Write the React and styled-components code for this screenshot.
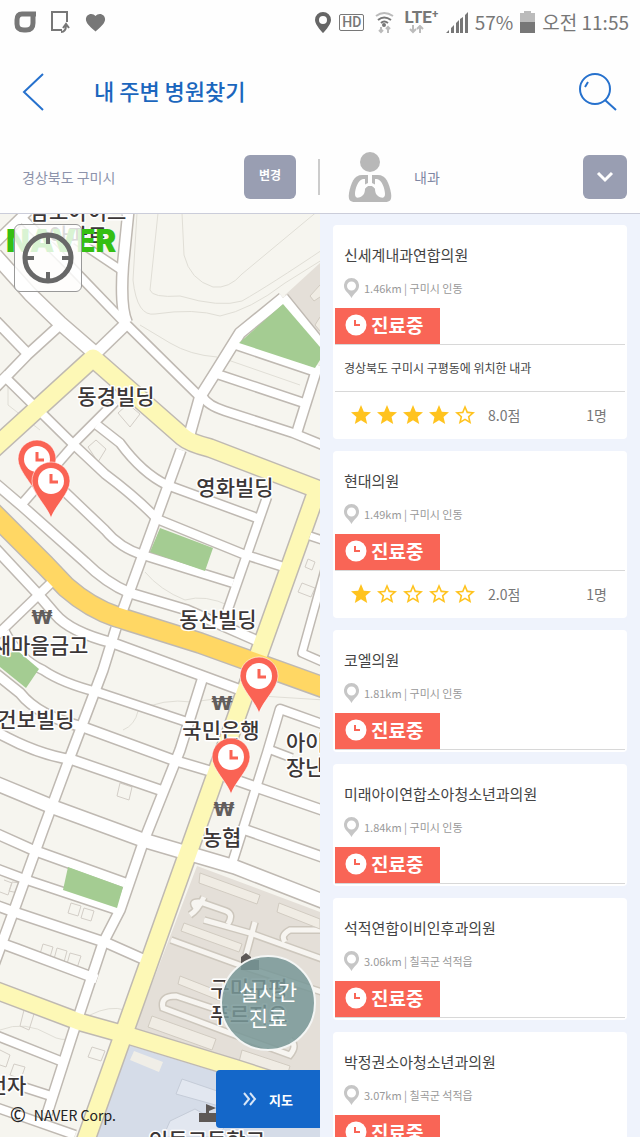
import React from 'react';
import styled, { createGlobalStyle } from 'styled-components';
import { MdFavorite, MdStar, MdStarBorder } from 'react-icons/md';

const GlobalStyle = createGlobalStyle`
  * {
    box-sizing: border-box;
  }
  body {
    margin: 0;
    background: #fefefe;
    font-family: 'Noto Sans CJK KR', 'Noto Sans', sans-serif;
  }
  button, select {
    font-family: inherit;
  }
`;

const StyledPage = styled.div`
  display: flex;
  flex-direction: column;
  height: 100vh;
  overflow: hidden;
`;

const StyledStatusBar = styled.div`
  display: flex;
  flex-shrink: 0;
  justify-content: space-between;
  align-items: center;
  height: 44px;
  padding: 0 11px 0 14px;
  color: #777;
  font-size: 19px;
  line-height: 24px;
`;
const StyledStatusGroup = styled.div`
  display: flex;
  align-items: center;
  gap: ${props => props.$gap}px;
  white-space: nowrap;
`;
const StyledHd = styled.span`
  padding: 0 2px;
  border: 1px solid #777;
  border-radius: 2px;
  font-family: Roboto, sans-serif;
  font-size: 14px;
  font-weight: 500;
  line-height: 15px;
`;
const StyledNetwork = styled.span`
  display: flex;
  flex-direction: column;
  font-family: Roboto, sans-serif;
  font-size: 17px;
  font-weight: 700;
  line-height: 15px;
`;

const StyledHeader = styled.header`
  display: flex;
  flex-shrink: 0;
  align-items: center;
  height: 96px;
  padding: 0 22px;
`;
const StyledIconButton = styled.button`
  display: flex;
  padding: 0;
  border: 0;
  background: none;
  cursor: pointer;
`;
const StyledTitle = styled.h1`
  flex: 1;
  margin: 0 0 4px 48px;
  color: #1b66bd;
  font-size: 22px;
  font-weight: 500;
  line-height: 32px;
`;

const StyledFilters = styled.div`
  display: flex;
  flex-shrink: 0;
  height: 74px;
  border-bottom: 1px solid #cbcdda;
`;
const StyledFilter = styled.div`
  display: flex;
  align-items: center;
  width: 50%;
  padding: ${props => props.$padding};
  color: #8d93ab;
  font-size: 14px;
`;
const StyledRegion = styled.span`
  flex: 1;
`;
const StyledDivider = styled.div`
  width: 2px;
  height: 36px;
  margin-left: 22px;
  background: #ccc;
`;
const StyledChange = styled.button`
  width: 52px;
  height: 44px;
  padding: 0 0 4px;
  border: 0;
  border-radius: 6px;
  background: #999eb2;
  color: #fff;
  font-size: 12px;
  font-weight: 700;
`;
const StyledSelect = styled.select`
  flex: 1;
  min-width: 0;
  height: 44px;
  margin-left: 22px;
  padding: 0;
  border: 0;
  background: none;
  color: #7f86a3;
  font-size: 14px;
  appearance: none;
`;
const StyledArrow = styled.label`
  display: flex;
  justify-content: center;
  align-items: center;
  width: 44px;
  height: 44px;
  border-radius: 6px;
  background: #999eb2;
`;

const StyledBody = styled.main`
  display: flex;
  flex: 1;
  min-height: 0;
`;

const StyledMap = styled.section`
  position: relative;
  width: 50%;
  overflow: hidden;
  background: #f6f5ef;
`;
const StyledMapDrawing = styled.svg`
  display: block;
  width: 100%;
  height: 100%;
  font-size: 21px;
  font-weight: 500;
`;
const StyledBank = styled.text`
  fill: #625d5c;
  font-family: 'DejaVu Sans', sans-serif;
  font-size: 19px;
  font-weight: 700;
  stroke: none;
`;
const StyledNaver = styled.span`
  position: absolute;
  top: 9px;
  left: 6px;
  color: #35bf12;
  font-family: Inter, sans-serif;
  font-size: 31px;
  font-weight: 900;
  line-height: 36px;
`;
const StyledLocate = styled.button`
  position: absolute;
  top: 10px;
  left: 14px;
  display: flex;
  justify-content: center;
  align-items: center;
  width: 68px;
  height: 68px;
  padding: 0;
  border: 1px solid #999;
  border-radius: 6px;
  background: #ffffffd0;
`;
const StyledLive = styled.button`
  position: absolute;
  right: 4px;
  bottom: 86px;
  width: 96px;
  height: 96px;
  padding: 2px 0 0;
  border: 2px solid #f4f6f5;
  border-radius: 50%;
  background: #789898d9;
  color: #fff;
  font-size: 21px;
  line-height: 26px;
`;
const StyledMapButton = styled.button`
  position: absolute;
  right: 0;
  bottom: 9px;
  display: flex;
  justify-content: center;
  align-items: center;
  gap: 12px;
  width: 104px;
  height: 58px;
  padding: 0;
  border: 0;
  border-radius: 4px 0 0 4px;
  background: #1467c9;
  color: #fff;
  font-size: 13px;
  font-weight: 700;
`;
const StyledCopyright = styled.div`
  position: absolute;
  bottom: 12px;
  left: 10px;
  display: flex;
  align-items: center;
  gap: 8px;
  color: #222;
  font-size: 14px;
  line-height: 20px;
`;
const StyledCopyrightSign = styled.span`
  font-family: 'Noto Sans', sans-serif;
  font-size: 19px;
`;

const StyledList = styled.ul`
  display: flex;
  flex-direction: column;
  gap: 12px;
  width: 50%;
  margin: 0;
  padding: 11px 13px;
  overflow-y: auto;
  background: #eff3fc;
  list-style: none;
  scrollbar-width: none;
`;
const StyledCard = styled.li`
  flex-shrink: 0;
  padding: 0 2px 2px;
  border-radius: 4px;
  background: #fff;
`;
const StyledCardHead = styled.div`
  height: 83px;
  padding: 18px 9px 0;
`;
const StyledName = styled.h2`
  margin: 0;
  color: #444;
  font-size: 15px;
  font-weight: 400;
  line-height: 24px;
`;
const StyledPlace = styled.div`
  display: flex;
  align-items: center;
  gap: 5px;
  margin-top: 11px;
  color: #999;
  font-size: 11px;
  line-height: 20px;
`;
const StyledBadgeRow = styled.div`
  display: flex;
  border-bottom: 1px solid #d8d8d8;
`;
const StyledBadge = styled.span`
  display: flex;
  align-items: center;
  gap: 4px;
  width: 105px;
  height: 36px;
  padding: 0 0 2px 10px;
  background: #f96556;
  color: #fff;
  font-size: 19px;
  font-weight: 700;
  line-height: 32px;
`;
const StyledDescription = styled.p`
  height: 47px;
  margin: 0;
  padding: 0 9px;
  border-bottom: 1px solid #d8d8d8;
  color: #444;
  font-size: 12px;
  line-height: 46px;
  white-space: nowrap;
`;
const StyledRating = styled.div`
  display: flex;
  align-items: center;
  height: 45px;
  padding: 0 18px 0 14px;
  color: #777;
  font-size: 14px;
`;
const StyledStars = styled.div`
  display: flex;
  gap: 2px;
  margin-right: 11px;
  color: #ffc31f;
  font-size: 24px;
`;
const StyledVoters = styled.span`
  margin-left: auto;
`;

const hospitals = [
  {
    name: '신세계내과연합의원',
    place: '1.46km | 구미시 인동',
    description: '경상북도 구미시 구평동에 위치한 내과',
    stars: 4,
    score: '8.0점',
    voters: '1명',
  },
  { name: '현대의원', place: '1.49km | 구미시 인동', stars: 1, score: '2.0점', voters: '1명' },
  { name: '코엘의원', place: '1.81km | 구미시 인동' },
  { name: '미래아이연합소아청소년과의원', place: '1.84km | 구미시 인동' },
  { name: '석적연합이비인후과의원', place: '3.06km | 칠곡군 석적읍' },
  { name: '박정권소아청소년과의원', place: '3.07km | 칠곡군 석적읍' },
];

// [width, path]
const streets = [
  [13, 'M-5 255L30 294L60 323L97 355'],
  [9, 'M-5 243L34 205'],
  [8, 'M24 220L70 266L124 322L200 397'],
  [7, 'M76 240L121 270'],
  [10, 'M129 205L123 265Q120 308 127 323'],
  [11, 'M127 323L95 354'],
  [9, 'M60 325L27 355L-5 388'],
  [9, 'M-5 320L27 353'],
  [8, 'M2 374L72 443L105 474Q137 498 157 519L243 554L290 569'],
  [8, 'M72 445L115 402'],
  [8, 'M97 425L120 443Q142 473 167 485L257 518'],
  [8, 'M72 447L22 504'],
  [8, 'M55 484L64 491L105 530Q120 548 143 555L233 583'],
  [9, 'M-5 483L22 506L85 562Q106 583 130 593L187 610L260 642'],
  [10, 'M283 298L240 333L217 370L200 397L188 440'],
  [10, 'M283 298L325 350'],
  [8, 'M233 344L316 372'],
  [8, 'M217 374L304 403'],
  [8, 'M203 397Q207 405 225 411L293 433L325 446'],
  [9, 'M318 365L296 435'],
  [9, 'M181 450L153 527L122 612'],
  [9, 'M116 628L103 670L70 757L43 830L13 913L-8 970'],
  [8, 'M267 497L227 612'],
  [7, 'M310 536L325 541'],
  [7, 'M325 570L302 653L325 663'],
  [9, 'M-5 548L37 593L55 614Q70 632 113 643L200 675L246 692'],
  [8, 'M52 582L-5 637'],
  [8, 'M5 632Q20 660 43 670Q62 683 97 692L187 722'],
  [9, 'M-5 673L20 693Q38 716 83 727L173 760L220 774'],
  [9, 'M-5 731Q35 754 73 760L160 790'],
  [13, 'M-5 783L53 807L143 840L235 867L325 902'],
  [9, 'M-5 833L33 850L125 883'],
  [8, 'M-5 868L27 880L117 910'],
  [9, 'M202 680L180 750L143 843L120 910L103 943L73 1033L47 1114'],
  [9, 'M-5 905L17 913L107 943L143 959'],
  [9, 'M-5 941L17 949L97 979'],
  [8, 'M-5 1035L63 1062'],
  [8, 'M20 1086L51 1096'],
  [8, 'M-5 1107L75 1135'],
  [8, 'M325 725L280 709L267 753L230 870'],
  [9, 'M213 772L250 785L325 811'],
  [7, 'M271 750L292 758'],
  [9, 'M243 829L325 858'],
];
const avenues = [
  [17, 'M-8 450L93 358L183 437Q190 443 210 448L325 492'],
  [17, 'M318 488L246 690L124 1033L84 1145'],
  [16, 'M-5 990L80 1022L130 1036L235 1068L325 1097'],
];
const highway = 'M-8 512L45 565L66 587Q90 608 117 617L200 643L325 688';

const alleys = [
  'M204 897Q198 910 190 915M196 908Q190 901 200 902L226 911Q234 914 228 924M204 920L250 933L325 960',
  'M171 940L245 967L325 993M255 922L246 955M325 930L290 930Q280 935 285 942',
  'M248 1020L176 996Q160 996 163 1008L232 1034L290 1055Q298 1045 290 1040',
];
const buildings = [
  '200,873 260,895 257,904 199,883',
  '184,923 242,944 239,952 181,931',
  '180,976 226,994 223,1002 178,984',
  '152,1016 216,1039 212,1050 148,1027',
  '279,903 320,919 320,929 277,912',
  '242,1050 290,1066 287,1076 239,1062',
];
const houses = [
  'M118 413l10 -9l12 10l-10 13z',
  'M88 447l8 -7l10 9l-8 13z',
  'M120 783l12 4l-3 13l-12 -4z',
  'M71 903l10 3l-3 10l-10 -3zM84 908l10 3l-3 10l-10 -3z',
  'M43 944l10 3l-3 10l-10 -3zM57 948l10 3l-3 11l-10 -3zM70 953l11 3l-4 12l-10 -4z',
  'M24 1010l10 4l-5 16l-9 -4z',
  'M92 1047l13 4l-4 10l-13 -4z',
  'M4 880l8 3l-4 12l-8 -3M12 882l9 1l-3 10l-9 -2z',
  'M308 559l7 3l-3 8l-7 -3zM302 583l13 5l-4 9l-13 -5z',
  'M0 1050l10 5l-4 12l-6 -2M14 1064l11 3l-4 12l-11 -4z',
];
const contours = [
  'M182 213L184 255Q190 280 213 287Q229 289 242 274L325 205',
  'M158 213L150 290Q152 298 180 296Q220 308 242 301Q270 285 325 248',
  'M137 213L133 280Q137 317 155 314Q195 308 220 316Q250 310 285 283L325 258',
  'M140 325Q155 334 170 343Q190 355 217 357',
  'M228 360L300 385',
  'M88 514L105 535',
  'M145 572Q160 590 185 600Q205 594 230 606',
  'M123 730Q135 725 138 711Q163 698 192 702L245 695L325 700',
  'M8 387L8 405L40 430',
  'M0 1030Q25 1020 50 1035T90 1015Q110 1005 125 1010',
];
const labels = [
  [78, 219, '삼보아이스'],
  [78, 243, '아파트'],
  [116, 404, '동경빌딩'],
  [235, 495, '영화빌딩'],
  [218, 627, '동산빌딩'],
  [40, 653, '새마을금고'],
  [36, 727, '건보빌딩'],
  [221, 738, '국민은행'],
  [222, 845, '농협'],
  [249, 996, '구미구평'],
  [249, 1022, '푸르지오'],
  [7, 1093, '전자'],
  [207, 1148, '인동고등학교'],
];
const banks = [[42, 624], [222, 710], [224, 816]];
const pins = [[37, 459], [51, 481], [259, 676], [231, 757]];

const CarrierIcon = () => (
  <svg width="22" height="22" viewBox="0 0 22 22" fill="none" stroke="#777" strokeWidth="5">
    <path d="M22 3H8Q3 3 3 9V13Q3 19 10 19H12Q19 19 19 12V3" />
  </svg>
);

const DeviceIcon = () => (
  <svg width="20" height="24" viewBox="0 0 20 24" fill="none" stroke="#777" strokeWidth="2">
    <path d="M17 12V2H2V20H10M5 20H12" />
    <path d="M11 22Q16 22 16 15M13 18L16 14L19 18" />
  </svg>
);

const StatusBar = () => (
  <StyledStatusBar>
    <StyledStatusGroup $gap={14}>
      <CarrierIcon />
      <DeviceIcon />
      <MdFavorite size="23" />
    </StyledStatusGroup>
    <StyledStatusGroup $gap={7}>
      <svg width="17" height="22" viewBox="0 0 17 22">
        <path fill="#666" fillRule="evenodd" d="M8 1A8 8 0 0 0 0 9C0 14 8 22 8 22S16 14 16 9A8 8 0 0 0 8 1ZM8 5A4 4 0 1 1 8 13A4 4 0 0 1 8 5Z" />
      </svg>
      <StyledHd>HD</StyledHd>
      <svg width="26" height="24" viewBox="4 0 26 24" fill="none" stroke="#777" strokeWidth="2">
        <path stroke="#bbb" d="M9 6Q17 0 26 6" />
        <path d="M11 10Q17 5 24 10M14 13Q17 10 21 13" />
        <circle cx="17" cy="15" r="1" fill="#777" />
        <path stroke="#bbb" d="M14 17V22M12 20L14 22L16 20M21 23V17M19 19L21 17L23 19" />
      </svg>
      <StyledNetwork>
        LTE⁺
        <svg width="24" height="9" viewBox="0 0 24 9" fill="none" stroke="#bbb" strokeWidth="2">
          <path d="M9 0V7M6 4L9 7L12 4M16 8V1M13 4L16 1L19 4" />
        </svg>
      </StyledNetwork>
      <svg width="22" height="22" viewBox="0 0 22 22" fill="#777">
        <path d="M0 22L3 19V22ZM5 17L8 14V22H5ZM10 12L13 9V22H10ZM14 8L17 6V22H14ZM19 4L22 1V22H19Z" />
      </svg>
      <span>57%</span>
      <svg width="15" height="22" viewBox="0 0 15 22">
        <path fill="#bbb" d="M4 0H11V2H15V11H0V2H4Z" />
        <path fill="#777" d="M0 11H15V22H0Z" />
      </svg>
      <span>오전 11:55</span>
    </StyledStatusGroup>
  </StyledStatusBar>
);

const Header = () => (
  <StyledHeader>
    <StyledIconButton aria-label="뒤로">
      <svg width="24" height="38" viewBox="0 0 24 38" fill="none" stroke="#2671cd" strokeWidth="2">
        <path d="M21 1L2 19L21 37" />
      </svg>
    </StyledIconButton>
    <StyledTitle>내 주변 병원찾기</StyledTitle>
    <StyledIconButton aria-label="검색">
      <svg width="40" height="38" viewBox="0 0 40 38" fill="none" stroke="#2671cd" strokeWidth="2">
        <circle cx="17" cy="16" r="15" />
        <path d="M27 27L38 37M7 14L10 9" />
      </svg>
    </StyledIconButton>
  </StyledHeader>
);

const LungIcon = () => (
  <svg width="44" height="52" viewBox="0 0 44 52">
    <circle cx="22" cy="11" r="10" fill="#b8b8b8" />
    <path fill="#b8b8b8" d="M14 24C6 24 3 32 1 42C0 49 2 51 7 51H37C42 51 44 49 43 42C41 32 38 24 30 24Z" />
    <path fill="#fefefe" d="M15 28C10 29 7 38 7 43C7 48 11 47 14 45Q17 43 17 38V28ZM29 28C34 29 37 38 37 43C37 48 33 47 30 45Q27 43 27 38V28Z" />
    <path fill="#fefefe" d="M20 23H24V32L28 34V39L25 36H19L16 39V34L20 32Z" />
    <path fill="#b8b8b8" d="M20 35H24L27 38V47H17V38Z" />
  </svg>
);

const Filters = () => (
  <StyledFilters>
    <StyledFilter $padding="0 0 0 22px">
      <StyledRegion>경상북도 구미시</StyledRegion>
      <StyledChange>변경</StyledChange>
      <StyledDivider />
    </StyledFilter>
    <StyledFilter $padding="0 13px 0 28px">
      <LungIcon />
      <StyledSelect id="subject" aria-label="진료과목">
        <option>내과</option>
      </StyledSelect>
      <StyledArrow htmlFor="subject">
        <svg width="18" height="12" viewBox="0 0 18 12" fill="none" stroke="#fff" strokeWidth="3">
          <path d="M2 2L9 9L16 2" />
        </svg>
      </StyledArrow>
    </StyledFilter>
  </StyledFilters>
);

const Pin = ({ x, y }) => (
  <g transform={`translate(${x} ${y})`}>
    <path fill="#fa6354" stroke="#fff" strokeOpacity=".6" d="M0 37C-4 25 -19 12 -19 0A19 19 0 0 1 19 0C19 12 4 25 0 37Z" />
    <circle r="13" fill="#fff" />
    <path fill="none" stroke="#fa6354" strokeWidth="3" d="M0 -7V1H7" />
  </g>
);

const Map = () => (
  <StyledMap>
    <StyledMapDrawing viewBox="0 214 320 923" preserveAspectRatio="xMidYMin slice">
      <g fill="none" stroke="#e0ded6">
        {contours.map(d => <path key={d} d={d} />)}
      </g>
      <path fill="#e4dfd8" d="M320 263L285 295L320 340ZM197 866L320 912V1092L134 1031Z" />
      <g fill="none" stroke="#cdc7bd" strokeWidth="8">
        {alleys.map(d => <path key={d} d={d} />)}
      </g>
      <g fill="none" stroke="#f7f5f1" strokeWidth="5">
        {alleys.map(d => <path key={d} d={d} />)}
      </g>
      <g fill="#f0ece4" stroke="#d1cbc1">
        {buildings.map(points => <polygon key={points} points={points} />)}
        <path d="M320 285L310 296L314 301L320 297M320 317L315 325L320 331" />
      </g>
      <path fill="#d5dce8" d="M128 1045L320 1103V1137H96Z" />
      <path fill="#e2e7f0" stroke="#c5ccd8" d="M182 1079L226 1094V1108L176 1094ZM170 1121L195 1109L225 1126L218 1137H163Z" />
      <path fill="#f0eee7" d="M134 1051L163 1062L159 1072L130 1060Z" />
      <g fill="none" stroke="#d3cec7">
        {houses.map(d => <path key={d} d={d} />)}
      </g>

      <g fill="none" stroke="#bfb9b2" strokeLinejoin="round">
        {streets.concat(avenues).map(([width, d]) => <path key={d} d={d} strokeWidth={width + 3} />)}
        <path d={highway} strokeWidth="22" />
      </g>
      <g fill="none" stroke="#fff" strokeLinejoin="round">
        {streets.map(([width, d]) => <path key={d} d={d} strokeWidth={width} />)}
      </g>
      <g fill="none" stroke="#fdf8b6" strokeLinejoin="round">
        {avenues.map(([width, d]) => <path key={d} d={d} strokeWidth={width} />)}
      </g>
      <path fill="none" stroke="#ffd764" strokeWidth="19" d={highway} />
      <g fill="#a4cc92">
        <path d="M283 304L239 343L315 368L320 360V347Z" />
        <path d="M160 528L213 548L205 571L150 552Z" />
        <path d="M0 655L18 651L39 669L26 688L0 667Z" />
        <path d="M68 867L123 887L117 908L63 890Z" />
      </g>

      <path fill="#5d5856" d="M241 969V957L246 953L251 957V960H259V970H241ZM199 1113H206V1104L216 1108L209 1111V1113H220V1122H199Z" />
      <g fill="#3c3737" stroke="#fff" strokeWidth="3" strokeLinejoin="round" paintOrder="stroke" textAnchor="middle">
        {labels.map(([x, y, text]) => <text key={text} x={x} y={y}>{text}</text>)}
        <text x="286" y="750" textAnchor="start">아이</text>
        <text x="286" y="775" textAnchor="start">장난</text>
        {banks.map(([x, y]) => <StyledBank key={y} x={x} y={y}>₩</StyledBank>)}
      </g>
      {pins.map(([x, y]) => <Pin key={y} x={x} y={y} />)}
    </StyledMapDrawing>

    <StyledNaver>NAVER</StyledNaver>
    <StyledLocate aria-label="현재 위치">
      <svg width="52" height="52" viewBox="0 0 52 52" fill="none" stroke="#686868" strokeWidth="5">
        <circle cx="26" cy="26" r="23" />
        <path strokeWidth="4" d="M26 2V12M26 40V50M2 26H12M40 26H50" />
      </svg>
    </StyledLocate>
    <StyledLive>실시간<br />진료</StyledLive>
    <StyledMapButton>
      <svg width="14" height="14" viewBox="0 0 14 14" fill="none" stroke="#d8e6f7" strokeWidth="2">
        <path d="M1 1L6 7L1 13M7 1L12 7L7 13" />
      </svg>
      지도
    </StyledMapButton>
    <StyledCopyright>
      <StyledCopyrightSign>©</StyledCopyrightSign>
      NAVER Corp.
    </StyledCopyright>
  </StyledMap>
);

const Hospital = ({ name, place, description, stars, score, voters }) => (
  <StyledCard>
    <StyledCardHead>
      <StyledName>{name}</StyledName>
      <StyledPlace>
        <svg width="15" height="20" viewBox="0 0 15 20">
          <path fill="#c6c6c6" fillRule="evenodd" d="M7.500 0A7.500 7.500 0 0 0 0 8C0 13 5 15 7.500 20C10 15 15 13 15 8A7.500 7.500 0 0 0 7.500 0ZM7.500 3.500A4.500 4.500 0 1 1 7.500 12.500A4.500 4.500 0 0 1 7.500 3.500Z" />
        </svg>
        {place}
      </StyledPlace>
    </StyledCardHead>
    <StyledBadgeRow>
      <StyledBadge>
        <svg width="22" height="22" viewBox="0 0 22 22">
          <circle cx="11" cy="11" r="10.500" fill="#fff" />
          <path d="M10 6V11H15" fill="none" stroke="#f96556" strokeWidth="2" />
        </svg>
        진료중
      </StyledBadge>
    </StyledBadgeRow>
    {description && <StyledDescription>{description}</StyledDescription>}
    {stars && (
      <StyledRating>
        <StyledStars>
          {[1, 2, 3, 4, 5].map(n => (n <= stars ? <MdStar key={n} /> : <MdStarBorder key={n} />))}
        </StyledStars>
        <span>{score}</span>
        <StyledVoters>{voters}</StyledVoters>
      </StyledRating>
    )}
  </StyledCard>
);

const App = () => (
  <StyledPage>
    <GlobalStyle />
    <StatusBar />
    <Header />
    <Filters />
    <StyledBody>
      <Map />
      <StyledList>
        {hospitals.map(hospital => <Hospital key={hospital.name} {...hospital} />)}
      </StyledList>
    </StyledBody>
  </StyledPage>
);

export default App;
